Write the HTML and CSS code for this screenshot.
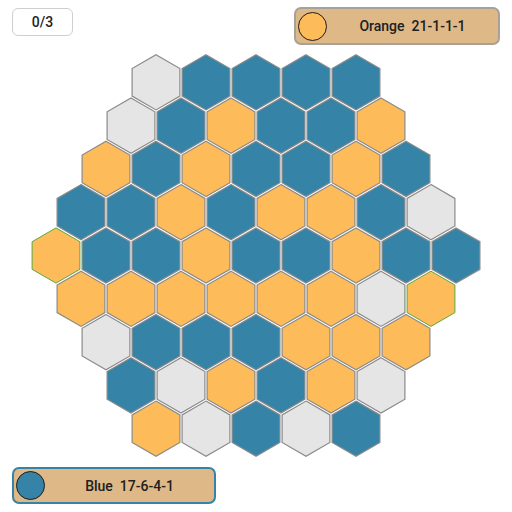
FILE: index.html
```html
<!DOCTYPE html>
<html lang="en">
<head>
<meta charset="utf-8">
<title>Hex Board</title>
<link rel="stylesheet" href="styles.css">
</head>
<body>
<div class="game">
  <header class="top-bar">
    <div class="counter">0/3</div>
    <div class="player player-orange">
      <span class="token token-orange"></span>
      <span class="player-label">Orange&nbsp;&nbsp;21-1-1-1</span>
    </div>
  </header>

  <svg class="board" viewBox="0 45 512 418" width="512" height="418" xmlns="http://www.w3.org/2000/svg" xmlns:xlink="http://www.w3.org/1999/xlink">
    <defs>
      <polygon id="hex" points="0,-27.6 23.9,-13.8 23.9,13.8 0,27.6 -23.9,13.8 -23.9,-13.8"/>
    </defs>
    <!-- row 0 -->
    <use href="#hex" x="156" y="82.3" class="cell e"/>
    <use href="#hex" x="206" y="82.3" class="cell b"/>
    <use href="#hex" x="256" y="82.3" class="cell b"/>
    <use href="#hex" x="306" y="82.3" class="cell b"/>
    <use href="#hex" x="356" y="82.3" class="cell b"/>
    <!-- row 1 -->
    <use href="#hex" x="131" y="125.6" class="cell e"/>
    <use href="#hex" x="181" y="125.6" class="cell b"/>
    <use href="#hex" x="231" y="125.6" class="cell o"/>
    <use href="#hex" x="281" y="125.6" class="cell b"/>
    <use href="#hex" x="331" y="125.6" class="cell b"/>
    <use href="#hex" x="381" y="125.6" class="cell o"/>
    <!-- row 2 -->
    <use href="#hex" x="106" y="168.9" class="cell o"/>
    <use href="#hex" x="156" y="168.9" class="cell b"/>
    <use href="#hex" x="206" y="168.9" class="cell o"/>
    <use href="#hex" x="256" y="168.9" class="cell b"/>
    <use href="#hex" x="306" y="168.9" class="cell b"/>
    <use href="#hex" x="356" y="168.9" class="cell o"/>
    <use href="#hex" x="406" y="168.9" class="cell b"/>
    <!-- row 3 -->
    <use href="#hex" x="81" y="212.2" class="cell b"/>
    <use href="#hex" x="131" y="212.2" class="cell b"/>
    <use href="#hex" x="181" y="212.2" class="cell o"/>
    <use href="#hex" x="231" y="212.2" class="cell b"/>
    <use href="#hex" x="281" y="212.2" class="cell o"/>
    <use href="#hex" x="331" y="212.2" class="cell o"/>
    <use href="#hex" x="381" y="212.2" class="cell b"/>
    <use href="#hex" x="431" y="212.2" class="cell e"/>
    <!-- row 4 -->
    <use href="#hex" x="56" y="255.5" class="cell o mark"/>
    <use href="#hex" x="106" y="255.5" class="cell b"/>
    <use href="#hex" x="156" y="255.5" class="cell b"/>
    <use href="#hex" x="206" y="255.5" class="cell o"/>
    <use href="#hex" x="256" y="255.5" class="cell b"/>
    <use href="#hex" x="306" y="255.5" class="cell b"/>
    <use href="#hex" x="356" y="255.5" class="cell o"/>
    <use href="#hex" x="406" y="255.5" class="cell b"/>
    <use href="#hex" x="456" y="255.5" class="cell b"/>
    <!-- row 5 -->
    <use href="#hex" x="81" y="298.8" class="cell o"/>
    <use href="#hex" x="131" y="298.8" class="cell o"/>
    <use href="#hex" x="181" y="298.8" class="cell o"/>
    <use href="#hex" x="231" y="298.8" class="cell o"/>
    <use href="#hex" x="281" y="298.8" class="cell o"/>
    <use href="#hex" x="331" y="298.8" class="cell o"/>
    <use href="#hex" x="381" y="298.8" class="cell e"/>
    <use href="#hex" x="431" y="298.8" class="cell o mark"/>
    <!-- row 6 -->
    <use href="#hex" x="106" y="342.1" class="cell e"/>
    <use href="#hex" x="156" y="342.1" class="cell b"/>
    <use href="#hex" x="206" y="342.1" class="cell b"/>
    <use href="#hex" x="256" y="342.1" class="cell b"/>
    <use href="#hex" x="306" y="342.1" class="cell o"/>
    <use href="#hex" x="356" y="342.1" class="cell o"/>
    <use href="#hex" x="406" y="342.1" class="cell o"/>
    <!-- row 7 -->
    <use href="#hex" x="131" y="385.4" class="cell b"/>
    <use href="#hex" x="181" y="385.4" class="cell e"/>
    <use href="#hex" x="231" y="385.4" class="cell o"/>
    <use href="#hex" x="281" y="385.4" class="cell b"/>
    <use href="#hex" x="331" y="385.4" class="cell o"/>
    <use href="#hex" x="381" y="385.4" class="cell e"/>
    <!-- row 8 -->
    <use href="#hex" x="156" y="428.7" class="cell o"/>
    <use href="#hex" x="206" y="428.7" class="cell e"/>
    <use href="#hex" x="256" y="428.7" class="cell b"/>
    <use href="#hex" x="306" y="428.7" class="cell e"/>
    <use href="#hex" x="356" y="428.7" class="cell b"/>
  </svg>

  <footer class="bottom-bar">
    <div class="player player-blue">
      <span class="token token-blue"></span>
      <span class="player-label">Blue&nbsp;&nbsp;17-6-4-1</span>
    </div>
  </footer>
</div>
</body>
</html>
```

FILE: styles.css
```css
* {
  box-sizing: border-box;
}

html, body {
  margin: 0;
  padding: 0;
  background: #ffffff;
}

body {
  font-family: Roboto, "Liberation Sans", Arial, sans-serif;
  color: #222222;
}

.game {
  width: 512px;
  height: 512px;
  display: flex;
  flex-direction: column;
}

/* Top row: move counter and the orange player's card */
.top-bar {
  height: 45px;
  padding: 7px 12px 0 12px;
  display: flex;
  justify-content: space-between;
  align-items: flex-start;
}

.counter {
  margin-top: 1px;
  width: 61px;
  height: 28px;
  border: 1px solid #cfcfcf;
  border-radius: 6px;
  display: flex;
  align-items: center;
  justify-content: center;
  font-size: 14px;
  font-weight: 500;
  color: #1e1e1e;
}

.player {
  height: 38px;
  border-radius: 7px;
  background: #deb887;
  display: flex;
  align-items: center;
  padding-left: 2px;
}

.player-orange {
  width: 206px;
  border: 2.5px solid #a7a19a;
}

.player-blue {
  width: 204px;
  height: 37px;
  border: 2.5px solid #3584a8;
}

.token {
  flex: none;
  width: 29px;
  height: 29px;
  border-radius: 50%;
  border: 1px solid #1c1c1c;
}

.token-orange {
  background: #fdbb5a;
}

.token-blue {
  background: #3584a8;
}

.player-label {
  flex: 1;
  text-align: center;
  font-size: 14px;
  font-weight: 500;
  color: #202020;
  white-space: nowrap;
}

/* Hex board */
.board {
  display: block;
  flex: none;
}

.cell {
  stroke: #8a8a8a;
  stroke-width: 1.2;
}

.cell.b {
  fill: #3584a8;
}

.cell.o {
  fill: #fdbb5a;
}

.cell.e {
  fill: #e5e5e5;
}

.cell.mark {
  stroke: #5aa83c;
  stroke-width: 1;
}

/* Bottom row: the blue player's card */
.bottom-bar {
  padding: 4px 0 0 12px;
  display: flex;
}
```
